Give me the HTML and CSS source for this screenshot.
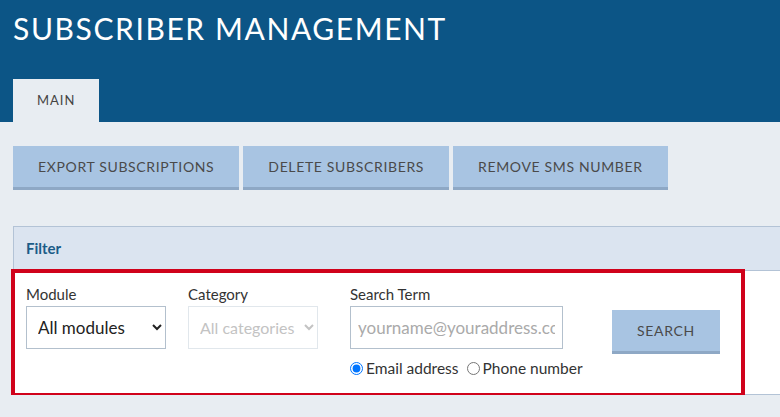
FILE: index.html
```html
<!DOCTYPE html>
<html lang="en">
<head>
<meta charset="utf-8">
<title>Subscriber Management</title>
<link rel="stylesheet" href="styles.css">
</head>
<body>
<header class="app-header">
  <h1 class="app-title">SUBSCRIBER MANAGEMENT</h1>
  <nav class="tabs">
    <a class="tab tab-active">MAIN</a>
  </nav>
</header>
<main class="content">
  <div class="actions">
    <button class="btn">EXPORT SUBSCRIPTIONS</button>
    <button class="btn">DELETE SUBSCRIBERS</button>
    <button class="btn">REMOVE SMS NUMBER</button>
  </div>
  <section class="panel">
    <div class="panel-head">Filter</div>
    <div class="panel-body">
      <div class="field field-module">
        <label class="field-label">Module</label>
        <select class="select">
          <option>All modules</option>
        </select>
      </div>
      <div class="field field-category">
        <label class="field-label">Category</label>
        <select class="select" disabled>
          <option>All categories</option>
        </select>
      </div>
      <div class="field field-search">
        <label class="field-label">Search Term</label>
        <input class="input" type="text" placeholder="yourname@youraddress.com">
        <div class="radios">
          <label class="radio"><input type="radio" name="t" checked> Email address</label>
          <label class="radio"><input type="radio" name="t"> Phone number</label>
        </div>
      </div>
      <button class="btn btn-search">SEARCH</button>
    </div>
    <div class="highlight"></div>
  </section>
</main>
</body>
</html>
```

FILE: styles.css
```css
html, body {
  margin: 0;
  padding: 0;
}
body {
  font-family: Lato, "Open Sans", sans-serif;
  background: #e8edf2;
  color: #333;
  overflow: hidden;
}
.app-header {
  background: #0c5586;
  padding: 10px 13px 0;
}
.app-title {
  margin: 0;
  font-weight: 400;
  font-size: 30px;
  line-height: 36px;
  letter-spacing: 1.6px;
  color: #fff;
}
.tabs {
  display: flex;
  margin-top: 33px;
}
.tab {
  display: block;
  background: #e8edf2;
  color: #444;
  font-size: 13px;
  letter-spacing: 1px;
  height: 43px;
  line-height: 43px;
  padding: 0 24px;
}
.content {
  padding: 24px 0 0 13px;
}
.actions {
  display: flex;
  gap: 4px;
}
.btn {
  font-family: inherit;
  background: #a8c4e2;
  border: none;
  border-bottom: 3px solid #8ea8c5;
  color: #4a4a4a;
  font-size: 14px;
  letter-spacing: 0.65px;
  height: 44px;
  padding: 0 25px;
  cursor: pointer;
}
.panel {
  position: relative;
  margin-top: 36px;
  margin-right: -20px;
  border: 1px solid #b3c3d6;
}
.panel-head {
  background: #dbe4f0;
  color: #1c5c88;
  font-weight: 700;
  font-size: 15px;
  height: 43px;
  line-height: 43px;
  padding-left: 12px;
  border-bottom: 1px solid #b3c3d6;
}
.panel-body {
  background: #fff;
  display: flex;
  align-items: flex-start;
  padding: 13px 12px 22px;
  height: 88px;
}
.field {
  display: flex;
  flex-direction: column;
}
.field-label {
  font-size: 15px;
  line-height: 20px;
  color: #333;
  margin-bottom: 2px;
}
.field-module { width: 140px; margin-right: 22px; }
.field-category { width: 130px; margin-right: 32px; }
.field-search { width: 213px; margin-right: 49px; }
.select, .input {
  font-family: inherit;
  font-size: 17px;
  height: 43px;
  box-sizing: border-box;
  border: 1px solid #b3c0cd;
  background: #fff;
  color: #222;
  padding: 0 7px;
  width: 100%;
  border-radius: 0;
}
.select {
  padding: 0 0 0 7px;
}
.select:disabled {
  font-size: 16px;
  color: #aaa;
  border-color: #d5dde5;
}
.input::placeholder {
  color: #aaa;
}
.radios {
  display: flex;
  gap: 8px;
  margin-top: 10px;
  white-space: nowrap;
}
.radio {
  display: flex;
  align-items: center;
  font-size: 15.5px;
  color: #333;
  gap: 3px;
}
.radio input {
  margin: 0;
  width: 13px;
  height: 13px;
}
.btn-search {
  margin-top: 26px;
  width: 108px;
  padding: 0;
}
.highlight {
  position: absolute;
  left: -3px;
  top: 42px;
  width: 734px;
  height: 128px;
  box-sizing: border-box;
  border: 4px solid #d0021b;
  pointer-events: none;
}
```
